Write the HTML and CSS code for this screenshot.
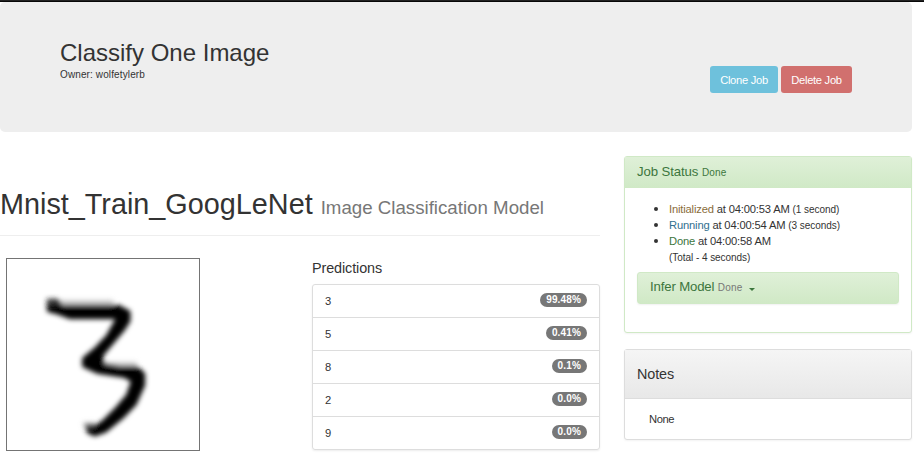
FILE: index.html
```html
<!DOCTYPE html>
<html lang="en">
<head>
<meta charset="utf-8">
<title>Classify One Image</title>
<link rel="stylesheet" href="styles.css">
</head>
<body>
<div class="navbar-edge"></div>
<header class="jumbotron">
  <div>
    <h2 class="job-title">Classify One Image</h2>
    <div class="owner">Owner: wolfetylerb</div>
  </div>
  <div class="actions">
    <button class="btn btn-info">Clone Job</button>
    <button class="btn btn-danger">Delete Job</button>
  </div>
</header>
<main class="row">
  <section class="results">
    <h1 class="page-header"><span class="model-name">Mnist_Train_GoogLeNet</span><small>Image Classification Model</small></h1>
    <div class="result-row">
      <svg class="digit" viewBox="18 24 582 579" role="img" aria-label="Handwritten digit">
        <defs><filter id="soft" x="-20%" y="-20%" width="140%" height="140%"><feGaussianBlur stdDeviation="8"/></filter></defs>
        <rect x="19.5" y="25.5" width="579" height="576" fill="#fff" stroke="#747474" stroke-width="3"/>
        <g filter="url(#soft)" fill="none" stroke-linejoin="round">
          <path d="M178 158H340M310 344H410" stroke="#ccc" stroke-width="16"/>
          <path d="M142 148H174L186 166H356L390 184V214L372 242L308 318L312 342L360 350H412L434 370V406L408 464L372 502L318 546L284 558L262 548L256 524H290L306 514L346 474L380 434L394 394L372 382L292 370L248 350V324L284 294L320 256L348 206H210L172 192L142 184Z" fill="#000" stroke="#000" stroke-width="3"/>
          <path d="M144 150H174V164H144Z" fill="#777" opacity=".5"/>
          <path d="M250 524H284" stroke="#999" stroke-width="14" opacity=".6"/>
        </g>
      </svg>
      <div class="predictions">
        <h4 class="predictions-title">Predictions</h4>
        <ul class="list-group">
          <li><span>3</span><span class="badge">99.48%</span></li>
          <li><span>5</span><span class="badge">0.41%</span></li>
          <li><span>8</span><span class="badge">0.1%</span></li>
          <li><span>2</span><span class="badge">0.0%</span></li>
          <li><span>9</span><span class="badge">0.0%</span></li>
        </ul>
      </div>
    </div>
  </section>
  <aside class="sidebar">
    <section class="panel panel-success">
      <h4 class="panel-heading">Job Status <small>Done</small></h4>
      <div class="status-body">
        <ul class="status-list">
          <li><span class="text-warning">Initialized</span> at 04:00:53 AM <small>(1 second)</small></li>
          <li><span class="text-info">Running</span> at 04:00:54 AM <small>(3 seconds)</small></li>
          <li><span class="text-success">Done</span> at 04:00:58 AM<br><small>(Total - 4 seconds)</small></li>
        </ul>
        <div class="task"><span>Infer Model <small>Done</small></span><i class="caret"></i></div>
      </div>
    </section>
    <section class="panel notes">
      <h4 class="notes-heading">Notes</h4>
      <div class="notes-body">None</div>
    </section>
  </aside>
</main>
</body>
</html>
```
FILE: styles.css
```css
* { box-sizing: border-box; }
body { margin: 0; height: 467px; overflow: hidden; background: #fff; color: #333; font: 11.2px/16px "Liberation Sans", Arial, sans-serif; }
h1, h2, h4, ul { margin: 0; padding: 0; font-weight: 400; }
.navbar-edge { height: 2px; background: linear-gradient(#222 50%, #080808 50%); }
.jumbotron { width: 912px; height: 130px; padding: 37px 60px 0; display: flex; justify-content: space-between; background: #eee; border-radius: 5px; }
.job-title { font-size: 24px; line-height: 28px; }
.owner { font-size: 10px; line-height: 14px; margin-top: 1px; letter-spacing: .12px; }
.actions { display: flex; gap: 3px; margin-top: 27px; }
.btn { height: 27px; padding: 1px 0 0; border: 0; border-radius: 3px; color: #fff; font: 11.2px "Liberation Sans", Arial, sans-serif; letter-spacing: -.3px; }
.btn-info { width: 68px; background: #6ec1dc; }
.btn-danger { width: 71px; background: #d1706e; }
.row { display: grid; grid-template-columns: 600px 288px; gap: 24px; padding-top: 24px; }
.page-header { height: 80px; padding-top: 31px; border-bottom: 1px solid #eee; font-size: 28.8px; line-height: 34px; white-space: nowrap; }
.page-header small { margin-left: 8px; font-size: 18.7px; color: #777; }
.result-row { display: grid; grid-template-columns: 194px 288px; justify-content: space-between; padding: 22px 0 0 6px; }
.digit { display: block; width: 194px; height: 193px; }
.predictions-title { font-size: 14.4px; line-height: 18px; padding-top: 1px; letter-spacing: -.1px; }
.list-group { margin-top: 7px; list-style: none; border: 1px solid #ddd; border-radius: 3px; box-shadow: 0 1px 2px rgba(0,0,0,.075); }
.list-group li { height: 33px; padding: 0 12px; display: flex; align-items: center; justify-content: space-between; border-bottom: 1px solid #ddd; }
.list-group li:last-child { height: 32px; border: 0; }
.badge { height: 14px; padding: 0 6px; border-radius: 8px; background: #777; color: #fff; font-size: 10px; line-height: 14px; font-weight: 700; letter-spacing: .15px; margin-top: -2px; }
.panel { border: 1px solid #ddd; border-radius: 3px; box-shadow: 0 1px 2px rgba(0,0,0,.05); background: #fff; }
.panel-success { height: 177px; border-color: #d0e9c6; }
.panel-heading { height: 31px; padding: 0 12px; font-size: 13.2px; line-height: 29px; letter-spacing: -.1px; color: #3c763d; background: linear-gradient(#dff0d8, #d0e9c6); }
.panel-heading small { font-size: 10px; letter-spacing: .2px; }
.status-body { padding: 12px 12px 0; }
.status-list { padding-left: 32px; letter-spacing: -.17px; }
.status-list li { height: 16px; }
.status-list li:last-child { height: 32px; }
.status-list li::marker { font-size: 14px; }
.status-list small { font-size: 10px; line-height: 12px; letter-spacing: -.05px; }
.text-warning { color: #8a6d3b; }
.text-info { color: #31708f; }
.text-success { color: #3c763d; }
.task { display: flex; align-items: center; height: 32px; margin-top: 8px; padding: 0 12px 2px; border: 1px solid #d0e9c6; border-radius: 3px; color: #3c763d; background: linear-gradient(#dff0d8, #d0e9c6); box-shadow: 0 1px 2px rgba(0,0,0,.06); font-size: 13.2px; letter-spacing: -.15px; }
.task small { font-size: 10px; color: #777; letter-spacing: .2px; }
.caret { margin: 4px 0 0 6px; border: 3px solid transparent; border-top-color: #3c763d; border-bottom: 0; }
.notes { height: 91px; margin-top: 16px; }
.notes-heading { height: 49px; padding: 0 12px; border-bottom: 1px solid #ddd; background: linear-gradient(#f5f5f5, #e8e8e8); font-size: 14.4px; line-height: 49px; letter-spacing: -.1px; }
.notes-body { padding: 12px 24px; letter-spacing: -.4px; }
```
